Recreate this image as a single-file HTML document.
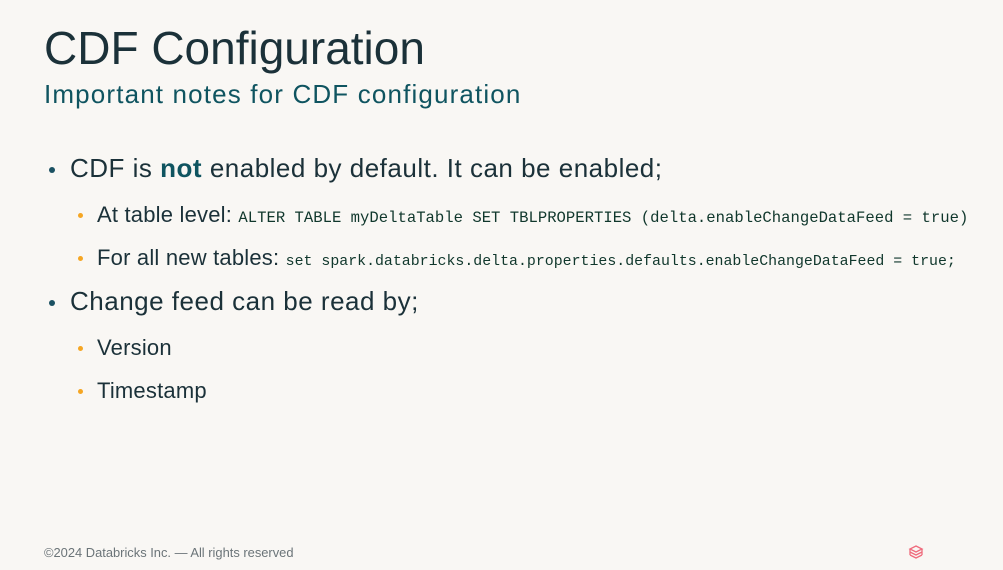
<!DOCTYPE html>
<html><head><meta charset="utf-8"><style>
body{margin:0;width:1003px;height:570px;background:#f9f7f4;font-family:"Liberation Sans",sans-serif;position:relative;overflow:hidden;color:#1b3139}
.a{position:absolute;white-space:nowrap}
h1{position:absolute;left:44px;top:21px;margin:0;font-weight:normal;font-size:46px;color:#1b3139}
.sub{left:44px;top:79px;font-size:26px;letter-spacing:1.15px;color:#0f5460}
.b1{font-size:26px;letter-spacing:0.5px;color:#1b3139}
.b2{font-size:22px;letter-spacing:0.2px;color:#1b3139}
.d1{position:absolute;width:6px;height:6px;border-radius:3px;background:#1b5162}
.d2{position:absolute;width:5px;height:5px;border-radius:3px;background:#f5a623}
code{font-family:"Liberation Mono",monospace;font-size:15.6px;letter-spacing:0;color:#10372c}
.foot{left:44px;top:545px;font-size:12.9px;color:#6b7478}
</style></head><body>
<h1>CDF Configuration</h1>
<div class="a sub">Important notes for CDF configuration</div>
<div class="d1" style="left:49px;top:167px"></div>
<div class="a b1" style="left:70px;top:153px">CDF is <b style="color:#0f5460">not</b> enabled by default. It can be enabled;</div>
<div class="d2" style="left:78px;top:213px"></div>
<div class="a b2" style="left:97px;top:202px">At table level: <code>ALTER TABLE myDeltaTable SET TBLPROPERTIES (delta.enableChangeDataFeed = true)</code></div>
<div class="d2" style="left:78px;top:256px"></div>
<div class="a b2" style="left:97px;top:245px">For all new tables: <code style="font-size:14.9px">set spark.databricks.delta.properties.defaults.enableChangeDataFeed = true;</code></div>
<div class="d1" style="left:49px;top:300px"></div>
<div class="a b1" style="left:70px;top:286px">Change feed can be read by;</div>
<div class="d2" style="left:78px;top:346px"></div>
<div class="a b2" style="left:97px;top:335px">Version</div>
<div class="d2" style="left:78px;top:389px"></div>
<div class="a b2" style="left:97px;top:378px">Timestamp</div>
<div class="a foot">©2024 Databricks Inc. — All rights reserved</div>
<svg class="a" style="left:908px;top:544px" width="16" height="16" viewBox="0 0 16 16" fill="none" stroke="#ef6b7c" stroke-width="1.3"><path d="M8 2L14 5 8 8 2 5Z"/><path d="M2 8l6 3 6-3M2 11l6 3 6-3M2 5v6M14 5v6"/></svg>
</body></html>
